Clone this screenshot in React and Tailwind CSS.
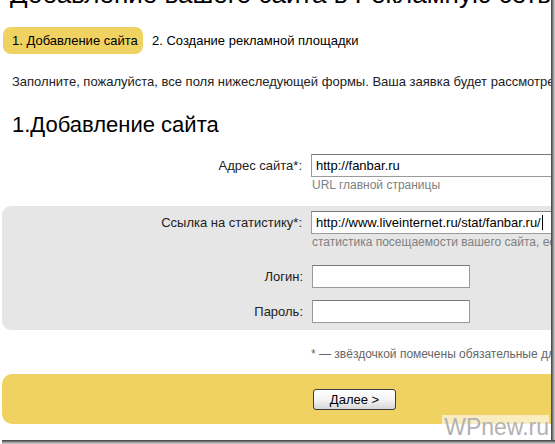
import React from 'react';

const font = { fontFamily: '"Liberation Sans", Arial, sans-serif' };

const Field = ({ value, width = 'w-[260px]', caret = false }) => (
    <div className={`h-[23px] ${width} shrink-0 bg-white border border-[#9a9a9a] border-t-[#7a7a7a] flex items-center pl-[4px] text-[13px] text-black whitespace-nowrap overflow-hidden`}>
        {value}
        {caret && <span className="inline-block w-[1px] h-[15px] bg-black ml-[1px]" />}
    </div>
);

const Row = ({ label, labelWidth, children }) => (
    <div className="flex items-start">
        <div className={`${labelWidth} shrink-0 text-right text-[13px] text-[#222] pt-[2px] pr-[9px] whitespace-nowrap`}>
            {label}
        </div>
        {children}
    </div>
);

const App = () => {
    return (
        <div className="w-[555px] h-[444px] bg-white flex flex-col overflow-hidden" style={font}>
            <div className="flex h-[440px]">
                <div className="w-[551px] h-[440px] overflow-hidden relative">
                    <h1 className="-mt-[21px] pl-[10px] text-[26px] leading-[30px] font-normal text-black whitespace-nowrap">
                        Добавление вашего сайта в Рекламную сеть Fanbar
                    </h1>

                    <div className="mt-[18px] flex items-center text-[13px] text-black">
                        <div className="ml-[3px] h-[27px] w-[140px] rounded-[8px] bg-[#f0d262] flex items-center pl-[9px] whitespace-nowrap">
                            1. Добавление сайта
                        </div>
                        <div className="pl-[9px] whitespace-nowrap">2. Создание рекламной площадки</div>
                    </div>

                    <p className="mt-[20px] pl-[12px] text-[13px] leading-[16px] text-[#222] whitespace-nowrap">
                        Заполните, пожалуйста, все поля нижеследующей формы. Ваша заявка будет рассмотрена в течение суток.
                    </p>

                    <h2 className="mt-[22px] pl-[12px] text-[22px] leading-[26px] font-normal text-black">
                        1.Добавление сайта
                    </h2>

                    <div className="mt-[16px]">
                        <Row label="Адрес сайта*:" labelWidth="w-[311px]">
                            <div className="flex flex-col">
                                <Field value="http://fanbar.ru" width="w-[300px]" />
                                <div className="pl-[1px] text-[12px] leading-[14px] mt-[1px] text-[#808080] whitespace-nowrap">
                                    URL главной страницы
                                </div>
                            </div>
                        </Row>
                    </div>

                    <div className="mt-[14px] ml-[2px] rounded-l-[9px] bg-[#e6e6e6] pt-[5px] pb-[7px]">
                        <Row label="Ссылка на статистику*:" labelWidth="w-[309px]">
                            <div className="flex flex-col">
                                <Field value="http://www.liveinternet.ru/stat/fanbar.ru/" width="w-[300px]" caret />
                                <div className="pl-[1px] text-[12px] leading-[14px] mt-[1px] text-[#808080] whitespace-nowrap">
                                    статистика посещаемости вашего сайта, если есть
                                </div>
                            </div>
                        </Row>
                        <div className="mt-[16px]">
                            <Row label="Логин:" labelWidth="w-[310px]">
                                <Field value="" width="w-[158px]" />
                            </Row>
                        </div>
                        <div className="mt-[12px]">
                            <Row label="Пароль:" labelWidth="w-[310px]">
                                <Field value="" width="w-[158px]" />
                            </Row>
                        </div>
                    </div>

                    <p className="mt-[17px] pl-[311px] text-[12px] leading-[14px] text-[#666] whitespace-nowrap">
                        * — звёздочкой помечены обязательные для заполнения поля
                    </p>

                    <div className="mt-[13px] ml-[2px] h-[50px] rounded-l-[10px] bg-[#f0d262] flex items-center pl-[311px]">
                        <button className="h-[21px] w-[83px] border border-[#3c3c3c] rounded-[3px] bg-gradient-to-b from-white via-[#f4f4f4] to-[#d6d6d6] text-[13px] text-black leading-none">
                            Далее &gt;
                        </button>
                    </div>

                    <div className="absolute right-[2px] bottom-[1px] text-[23px] leading-[24px] text-[#b2b2b2] bg-white/60 pl-[2px]">
                        WPnew.ru
                    </div>
                </div>
                <div className="w-[4px] h-[440px] bg-gradient-to-r from-[#3a3a3a] via-[#8a8a8a] to-[#d8d8d8]" />
            </div>
            <div className="flex h-[4px]">
                <div className="w-[2px] bg-white" />
                <div className="flex-1 bg-gradient-to-b from-[#3a3a3a] via-[#8a8a8a] to-[#d8d8d8]" />
            </div>
        </div>
    );
};

export default App;
